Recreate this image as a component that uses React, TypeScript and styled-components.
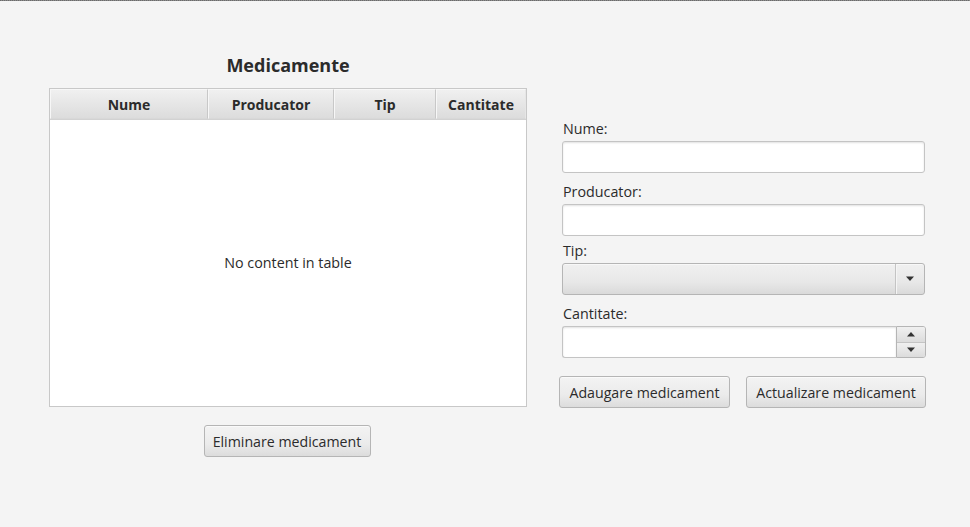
import React from "react";
import styled, { createGlobalStyle } from "styled-components";

const Global = createGlobalStyle`
  html, body { margin: 0; padding: 0; background: #f4f4f4; }
  body { font-family: "Open Sans", "Noto Sans", sans-serif; color: #333; }
`;

const Window = styled.div`
  width: 970px;
  height: 527px;
  box-sizing: border-box;
  background: #f4f4f4;
  position: relative;
  display: flex;
  align-items: flex-start;
  padding: 0 0 0 49px;
  &::before {
    content: "";
    position: absolute;
    left: 0;
    right: 0;
    top: 0;
    height: 1px;
    background: repeating-linear-gradient(to right, #6a6a6a 0 1px, #8a8a8a 1px 2px);
  }
`;

const LeftColumn = styled.div`
  width: 478px;
  display: flex;
  flex-direction: column;
  align-items: center;
  padding-top: 53px;
`;

const Title = styled.h1`
  margin: 0;
  height: 35px;
  font-size: 18px;
  line-height: 24px;
  font-weight: 700;
  color: #2b2b2b;
`;

const Table = styled.div`
  width: 478px;
  height: 319px;
  box-sizing: border-box;
  border: 1px solid #c8c8c8;
  background: #fff;
  display: flex;
  flex-direction: column;
`;

const HeaderRow = styled.div`
  display: flex;
  height: 31px;
  box-sizing: border-box;
  border-bottom: 1px solid #d2d2d2;
  background: #f4f4f4;
`;

const HeaderCell = styled.div<{ $w: number }>`
  width: ${(p) => p.$w}px;
  box-sizing: border-box;
  display: flex;
  align-items: center;
  justify-content: center;
  font-size: 14px;
  font-weight: 700;
  color: #2b2b2b;
  background: linear-gradient(to bottom, #f0f0f0, #dcdcdc);
  border: 1px solid #f7f7f7;
  border-right-color: #c8c8c8;
  border-bottom-color: #d8d8d8;
  &:last-child { border-right-color: #e6e6e6; }
`;

const TableBody = styled.div`
  flex: 1;
  display: flex;
  align-items: center;
  justify-content: center;
  font-size: 14.3px;
  color: #2b2b2b;
  padding-bottom: 1px;
`;

const Button = styled.button<{ $w: number }>`
  width: ${(p) => p.$w}px;
  height: 32px;
  box-sizing: border-box;
  font-family: "Open Sans", "Noto Sans", sans-serif;
  font-size: 14.2px;
  color: #2b2b2b;
  border: 1px solid #b5b5b5;
  border-radius: 3px;
  background: linear-gradient(to bottom, #f3f3f3 0%, #ebebeb 60%, #dcdcdc 100%);
  box-shadow: inset 0 1px 0 #fafafa;
  padding: 0;
  cursor: default;
`;

const BottomButtonRow = styled.div`
  margin-top: 18px;
  display: flex;
  justify-content: center;
  padding-right: 2px;
`;

const RightColumn = styled.div`
  margin-left: 32px;
  width: 367px;
  padding-top: 117px;
  display: flex;
  flex-direction: column;
`;

const Field = styled.div<{ $gap: number }>`
  display: flex;
  flex-direction: column;
  margin-top: ${(p) => p.$gap}px;
  padding-left: 3px;
`;

const Label = styled.label`
  font-size: 14.3px;
  line-height: 24px;
  height: 24px;
  color: #2b2b2b;
  padding-left: 1px;
`;

const TextInput = styled.div`
  width: 363px;
  height: 32px;
  box-sizing: border-box;
  background: #fff;
  border: 1px solid #c4c4c4;
  border-radius: 3px;
  box-shadow: inset 0 1px 2px rgba(0, 0, 0, 0.12);
`;

const Combo = styled.div`
  width: 363px;
  height: 32px;
  box-sizing: border-box;
  border: 1px solid #b5b5b5;
  border-radius: 3px;
  background: linear-gradient(to bottom, #f0f0f0 0%, #e8e8e8 60%, #dadada 100%);
  box-shadow: inset 0 1px 0 #f8f8f8;
  display: flex;
  justify-content: flex-end;
`;

const ComboArrow = styled.div`
  width: 28px;
  border-left: 1px solid #c4c4c4;
  display: flex;
  align-items: center;
  justify-content: center;
  box-shadow: inset 1px 0 0 #f5f5f5;
`;

const Spinner = styled.div`
  width: 364px;
  height: 32px;
  display: flex;
`;

const SpinnerInput = styled.div`
  flex: 1;
  box-sizing: border-box;
  background: #fff;
  border: 1px solid #c4c4c4;
  border-right: none;
  border-radius: 3px 0 0 3px;
  box-shadow: inset 0 1px 2px rgba(0, 0, 0, 0.12);
`;

const SpinnerButtons = styled.div`
  width: 30px;
  box-sizing: border-box;
  border: 1px solid #b5b5b5;
  border-radius: 0 3px 3px 0;
  display: flex;
  flex-direction: column;
  overflow: hidden;
`;

const SpinButton = styled.div`
  flex: 1;
  display: flex;
  align-items: center;
  justify-content: center;
  background: linear-gradient(to bottom, #f0f0f0, #dcdcdc);
  & + & { border-top: 1px solid #c4c4c4; }
`;

const ActionRow = styled.div`
  margin-top: 18px;
  display: flex;
  gap: 16px;
`;

const Tri = ({ up }: { up?: boolean }) => (
  <svg width="10" height="6" viewBox="0 0 10 6">
    {up ? (
      <polygon points="1,5.5 9,5.5 5,1" fill="#333" />
    ) : (
      <polygon points="1,0.5 9,0.5 5,5" fill="#333" />
    )}
  </svg>
);

export default function App() {
  return (
    <>
      <Global />
      <Window>
        <LeftColumn>
          <Title>Medicamente</Title>
          <Table>
            <HeaderRow>
              <HeaderCell $w={158}>Nume</HeaderCell>
              <HeaderCell $w={126}>Producator</HeaderCell>
              <HeaderCell $w={102}>Tip</HeaderCell>
              <HeaderCell $w={90}>Cantitate</HeaderCell>
            </HeaderRow>
            <TableBody>No content in table</TableBody>
          </Table>
          <BottomButtonRow>
            <Button $w={167}>Eliminare medicament</Button>
          </BottomButtonRow>
        </LeftColumn>
        <RightColumn>
          <Field $gap={0}>
            <Label>Nume:</Label>
            <TextInput />
          </Field>
          <Field $gap={7}>
            <Label>Producator:</Label>
            <TextInput />
          </Field>
          <Field $gap={3}>
            <Label>Tip:</Label>
            <Combo>
              <ComboArrow>
                <Tri />
              </ComboArrow>
            </Combo>
          </Field>
          <Field $gap={7}>
            <Label>Cantitate:</Label>
            <Spinner>
              <SpinnerInput />
              <SpinnerButtons>
                <SpinButton>
                  <Tri up />
                </SpinButton>
                <SpinButton>
                  <Tri />
                </SpinButton>
              </SpinnerButtons>
            </Spinner>
          </Field>
          <ActionRow>
            <Button $w={171}>Adaugare medicament</Button>
            <Button $w={180}>Actualizare medicament</Button>
          </ActionRow>
        </RightColumn>
      </Window>
    </>
  );
}
